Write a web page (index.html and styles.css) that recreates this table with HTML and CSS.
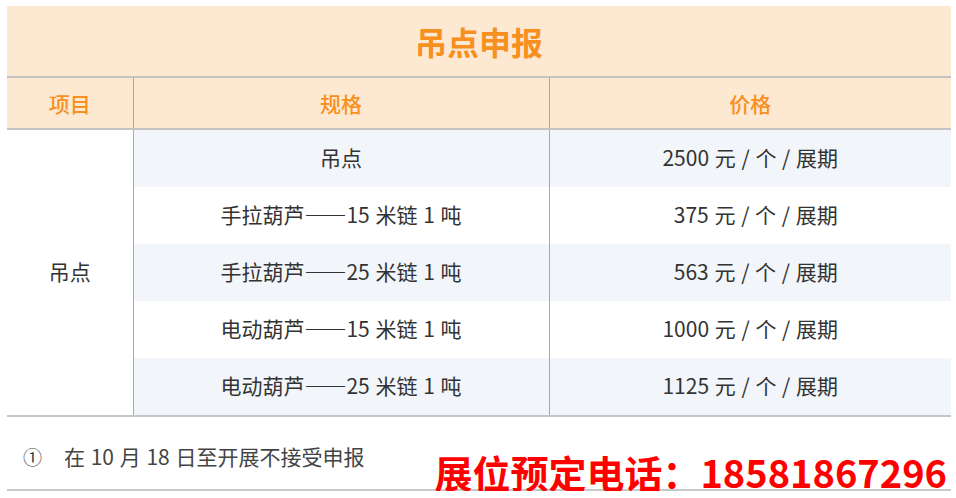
FILE: index.html
```html
<!DOCTYPE html>
<html lang="zh">
<head>
<meta charset="utf-8">
<title>吊点申报</title>
<link rel="stylesheet" href="styles.css">
</head>
<body>
<div class="page">
  <table class="price-table">
    <colgroup>
      <col class="c1"><col class="c2"><col class="c3">
    </colgroup>
    <thead>
      <tr class="title-row"><th colspan="3">吊点申报</th></tr>
      <tr class="head-row"><th>项目</th><th>规格</th><th>价格</th></tr>
    </thead>
    <tbody>
      <tr class="alt"><td class="item" rowspan="5">吊点</td><td>吊点</td><td>2500 元 / 个 / 展期</td></tr>
      <tr><td>手拉葫芦——15 米链 1 吨</td><td class="pad">375 元 / 个 / 展期</td></tr>
      <tr class="alt"><td>手拉葫芦——25 米链 1 吨</td><td class="pad">563 元 / 个 / 展期</td></tr>
      <tr><td>电动葫芦——15 米链 1 吨</td><td>1000 元 / 个 / 展期</td></tr>
      <tr class="alt"><td>电动葫芦——25 米链 1 吨</td><td>1125 元 / 个 / 展期</td></tr>
    </tbody>
  </table>
  <div class="note">
    <span class="num">①</span><span>在 10 月 18 日至开展不接受申报</span>
    <div class="hotline">展位预定电话：18581867296</div>
  </div>
</div>
</body>
</html>
```
FILE: styles.css
```css
html, body {
  margin: 0;
  padding: 0;
  background: #ffffff;
}
body {
  font-family: "Noto Sans CJK SC", "Noto Sans", sans-serif;
  color: #333333;
}
.page {
  width: 944px;
  padding: 6px 0 0 7px;
}
.price-table {
  width: 944px;
  border-collapse: collapse;
  table-layout: fixed;
}
.c1 { width: 126px; }
.c2 { width: 416px; }
.c3 { width: 402px; }
.title-row th {
  height: 70px;
  padding: 0;
  background: #fde8d1;
  color: #f7901e;
  font-size: 32px;
  font-weight: 700;
  border-bottom: 2px solid #c5c3c1;
  text-align: center;
}
.head-row th {
  height: 50px;
  padding: 0;
  background: #fde8d1;
  color: #f7901e;
  font-size: 21px;
  font-weight: 500;
  border-bottom: 2px solid #c5c3c1;
  text-align: center;
}
.head-row th + th {
  border-left: 1px solid #a9a9a9;
}
tbody td {
  height: 53px;
  padding: 0 0 4px 0;
  font-size: 21px;
  word-spacing: 1px;
  text-align: center;
  border-left: 1px solid #a9a9a9;
}
tbody td.item {
  border-left: 0;
  background: #ffffff;
}
tbody tr.alt td {
  background: #f2f5fa;
}
tbody tr.alt td.item {
  background: #ffffff;
}
tbody tr:last-child td,
tbody td.item {
  border-bottom: 2px solid #c5c5c5;
}
td.pad {
  padding-left: 11px;
}
.note {
  position: relative;
  height: 74px;
  padding-top: 6px;
  border-bottom: 2px solid #c8c8c8;
  display: flex;
  align-items: center;
  font-size: 21px;
  word-spacing: 1px;
  color: #444444;
  box-sizing: border-box;
}
.note .num {
  margin-left: 16px;
  margin-right: 22px;
  font-size: 19px;
}
.hotline {
  position: absolute;
  right: 4px;
  bottom: -2px;
  color: #ff0000;
  font-size: 38px;
  font-weight: 700;
  line-height: 1;
  word-spacing: 0;
}
```
